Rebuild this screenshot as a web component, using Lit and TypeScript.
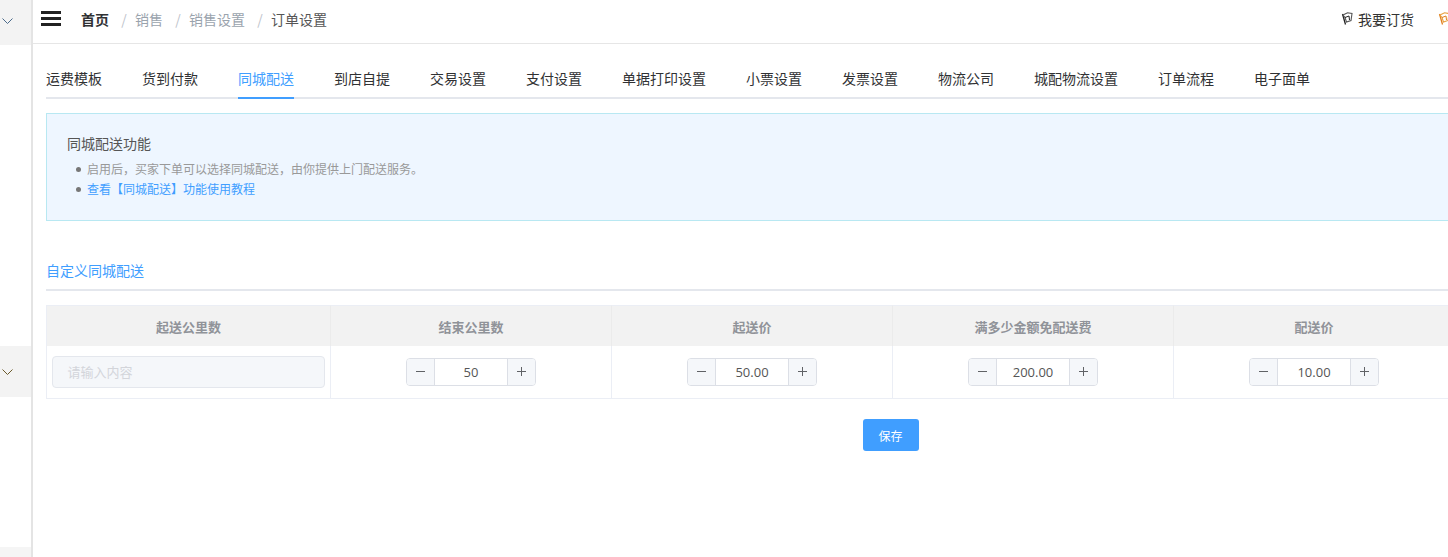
import { LitElement, html, css, svg } from "lit";
import { customElement } from "lit/decorators.js";

const flag = (c: string, d: string) => svg`<svg class="flag" viewBox="0 0 12 13" width="12" height="13" fill="none">
  <path d="M1.5 2 L4.5 12.5" stroke="${d}" stroke-width="1.3"/>
  <path d="M2 3 L6.5 .8 L11 1.5 L10 8.5 L5.5 10 L4 5.5 Z" stroke="${c}" stroke-width="1.1"/>
  <path d="M4 5.5 L8 4 L8.5 8" stroke="${d}" stroke-width="1"/>
</svg>`;

@customElement("app-root")
export class AppRoot extends LitElement {
  static styles = css`
    :host { display: flex; width: 1448px; height: 557px; overflow: hidden; background: #fff;
      font-family: "Noto Sans CJK SC", "Open Sans", sans-serif; color: #333; font-size: 14px; }
    .side { width: 31px; flex: none; display: flex; flex-direction: column; border-right: 2px solid #e4e4e4; }
    .sgray { background: #f3f3f3; display: flex; align-items: center; padding-left: 2px; box-sizing: border-box; }
    .s1 { height: 45px; padding-bottom: 3px; }
    .s2 { height: 51px; margin-top: 301px; }
    .s3 { height: 10px; margin-top: 150px; background: #f5f5f5; }
    .main { width: 1415px; flex: none; overflow: hidden; display: flex; flex-direction: column; }
    .head { flex: none; border-bottom: 1px solid #e6e6e6; display: flex; align-items: center; padding: 0 0 6px 8px; box-sizing: border-box; height: 44px; }
    .burger { width: 20px; height: 15px; border-top: 3px solid #222; border-bottom: 3px solid #222; box-sizing: border-box; flex: none; }
    .burger i { display: block; height: 3px; background: #222; margin-top: 3px; }
    .crumbs { margin-left: 20px; display: flex; align-items: center; font-size: 14px; color: #9aa3ad; }
    .crumbs b { color: #303133; font-weight: 700; }
    .crumbs .sep { color: #c0c4cc; width: 26px; box-sizing: border-box; padding-left: 4px; text-align: center; }
    .crumbs .cur { color: #555; }
    .right { margin-left: auto; margin-right: -2px; display: flex; align-items: center; font-size: 14px; color: #333; }
    .flag { flex: none; display: block; }
    .right .flag + span { margin-left: 5px; }
    .right .second { margin-left: 24px; }
    .body { padding: 0 0 0 13px; width: 1702px; box-sizing: border-box; }
    .tabs { display: flex; gap: 40px; margin-top: 21px; height: 32px; border-bottom: 2px solid #e4e7ed; font-size: 14px; color: #303133; }
    .tab { height: 34px; line-height: 27px; box-sizing: border-box; white-space: nowrap; }
    .tab.on { color: #409eff; border-bottom: 2px solid #409eff; }
    .alert { margin-top: 14px; height: 108px; box-sizing: border-box; background: #eef6ff; border: 1px solid #b8e8f2; padding: 18px 20px; }
    .alert h4 { margin: 0; font-weight: 400; font-size: 14px; line-height: 22px; color: #555; }
    .alert ul { list-style: none; margin: 5px 0 0; padding: 0 0 0 9px; font-size: 12px; line-height: 20px; color: #999; }
    .alert li { display: flex; align-items: center; gap: 6px; }
    .alert li::before { content: ""; width: 5px; height: 5px; border-radius: 50%; background: #777; flex: none; }
    .alert a { color: #409eff; }
    .sub { margin-top: 39px; height: 29px; border-bottom: 2px solid #e4e7ed; color: #409eff; font-size: 14px; line-height: 20px; }
    .tbl { margin-top: 14px; width: 1409px; border-left: 1px solid #ebeef5; }
    .row { display: grid; grid-template-columns: 284px repeat(4, 281px); }
    .th { height: 41px; background: #f2f2f2; border-right: 1px solid #ebebeb; border-top: 1px solid #ebeef5; box-sizing: border-box; display: flex; align-items: center; justify-content: center;
      font-size: 13px; font-weight: 700; color: #909399; }
    .td { height: 53px; padding-bottom: 1px; border-right: 1px solid #ebeef5; border-bottom: 1px solid #ebeef5; box-sizing: border-box; display: flex; align-items: center; justify-content: center; }
    .inp { width: 273px; height: 32px; box-sizing: border-box; background: #f5f7fa; border: 1px solid #e4e7ed; border-radius: 4px; color: #d3d5da; font-size: 13px; padding-left: 15px; line-height: 30px; margin-left: -1px; }
    .num { width: 130px; height: 28px; box-sizing: border-box; border: 1px solid #dcdfe6; border-radius: 4px; display: flex; align-items: center; }
    .btn { width: 28px; height: 26px; box-sizing: border-box; background: #f5f7fa; display: flex; align-items: center; justify-content: center; flex: none; }
    .btn:first-child { border-right: 1px solid #dcdfe6; border-radius: 3px 0 0 3px; }
    .btn:last-child { border-left: 1px solid #dcdfe6; border-radius: 0 3px 3px 0; }
    .val { flex: 1; text-align: center; font-family: "Open Sans", sans-serif; font-size: 13px; color: #555; }
    .foot { display: flex; justify-content: center; margin-top: 20px; }
    .save { width: 56px; height: 32px; background: #409eff; color: #fff; font-size: 12px; border-radius: 3px; display: flex; align-items: center; justify-content: center; }
  `;

  private chev(color: string) {
    return html`<svg width="11" height="6" viewBox="0 0 11 6" fill="none"><path d="M.5 .5 L5.5 5.5 L10.5 .5" stroke="${color}" stroke-width="1"/></svg>`;
  }

  private stepper(v: string) {
    const ic = (d: string) => html`<svg width="9" height="9" viewBox="0 0 9 9" fill="none"><path d="${d}" stroke="#606266" stroke-width="1"/></svg>`;
    return html`<div class="num"><div class="btn">${ic("M0 4.5H9")}</div><div class="val">${v}</div><div class="btn">${ic("M0 4.5H9M4.5 0V9")}</div></div>`;
  }

  render() {
    const tabs = ["运费模板", "货到付款", "同城配送", "到店自提", "交易设置", "支付设置", "单据打印设置", "小票设置", "发票设置", "物流公司", "城配物流设置", "订单流程", "电子面单"];
    const heads = ["起送公里数", "结束公里数", "起送价", "满多少金额免配送费", "配送价"];
    return html`
      <aside class="side">
        <div class="sgray s1">${this.chev("#4a6a8a")}</div>
        <div class="sgray s2">${this.chev("#6b5a2a")}</div>
        <div class="sgray s3"></div>
      </aside>
      <main class="main">
        <header class="head">
          <div class="burger"><i></i></div>
          <nav class="crumbs">
            <b>首页</b><span class="sep">/</span><span>销售</span><span class="sep">/</span><span>销售设置</span><span class="sep">/</span><span class="cur">订单设置</span>
          </nav>
          <div class="right">
            ${flag("#555", "#222")}<span>我要订货</span>
            <span class="second">${flag("#e8a040", "#e08020")}</span>
          </div>
        </header>
        <div class="body">
          <div class="tabs">${tabs.map((t, i) => html`<div class="tab ${i === 2 ? "on" : ""}">${t}</div>`)}</div>
          <section class="alert">
            <h4>同城配送功能</h4>
            <ul>
              <li>启用后，买家下单可以选择同城配送，由你提供上门配送服务。</li>
              <li><a>查看【同城配送】功能使用教程</a></li>
            </ul>
          </section>
          <div class="sub">自定义同城配送</div>
          <div class="tbl">
            <div class="row">${heads.map((h) => html`<div class="th">${h}</div>`)}</div>
            <div class="row">
              <div class="td"><div class="inp">请输入内容</div></div>
              ${["50", "50.00", "200.00", "10.00"].map((v) => html`<div class="td">${this.stepper(v)}</div>`)}
            </div>
          </div>
          <div class="foot"><div class="save">保存</div></div>
        </div>
      </main>
    `;
  }
}
